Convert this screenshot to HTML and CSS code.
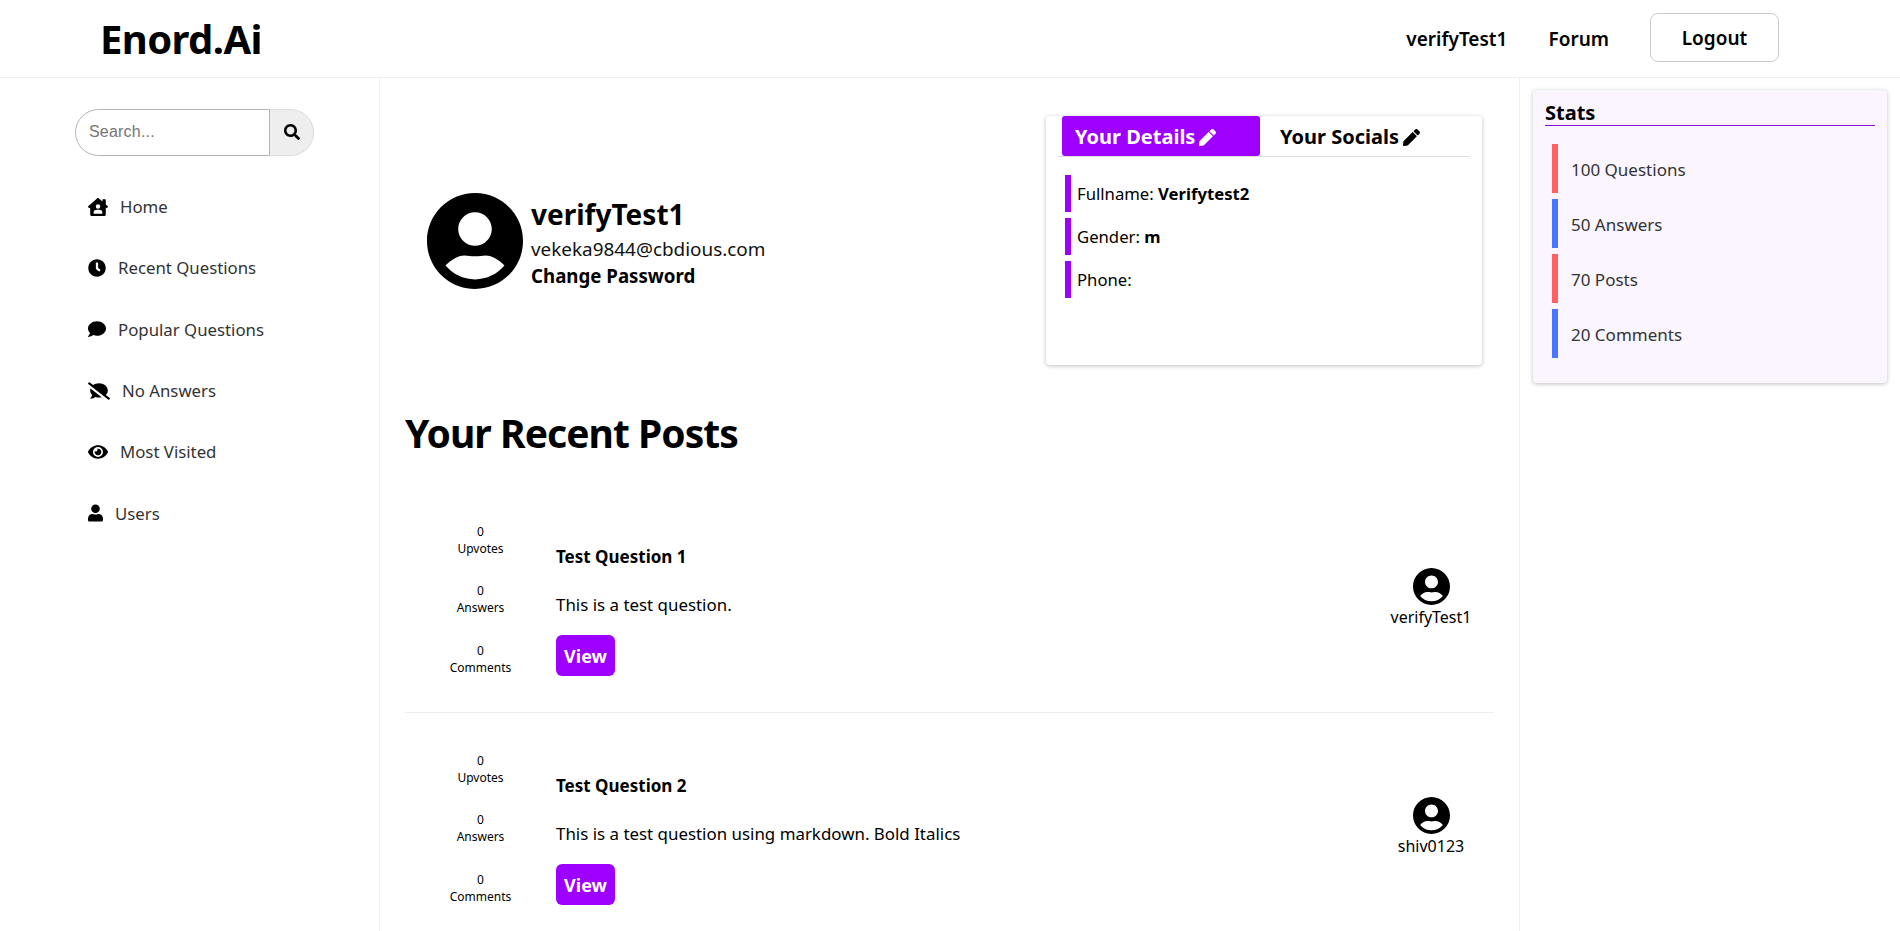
FILE: index.html
```html
<!DOCTYPE html>
<html lang="en">
<head>
    <meta charset="UTF-8">
    <title>Enord.Ai</title>
    <meta name="viewport" content="width=device-width, initial-scale=1.0">
    <link rel="stylesheet" href="styles.css">
</head>
<body>
    <svg class="icon-defs" aria-hidden="true">
        <symbol id="i-search" viewBox="0 0 512 512"><path d="M505 442.7L405.3 343c-4.5-4.5-10.6-7-17-7H372c27.6-35.3 44-79.7 44-128C416 93.1 322.9 0 208 0S0 93.1 0 208s93.1 208 208 208c48.3 0 92.7-16.4 128-44v16.3c0 6.4 2.5 12.5 7 17l99.7 99.7c9.4 9.4 24.6 9.4 33.9 0l28.3-28.3c9.4-9.4 9.4-24.6.1-34zM208 336c-70.7 0-128-57.2-128-128 0-70.7 57.2-128 128-128 70.7 0 128 57.2 128 128 0 70.7-57.2 128-128 128z"/></symbol>
        <symbol id="i-home" viewBox="0 0 576 512"><path d="M570.69,236.27,512,184.44V48a16,16,0,0,0-16-16H432a16,16,0,0,0-16,16V99.67L314.78,10.3C308.5,4.61,296.53,0,288,0s-20.46,4.61-26.74,10.3l-256,226A18.27,18.27,0,0,0,0,248.2a18.64,18.64,0,0,0,4.09,10.71L25.5,282.7a21.14,21.14,0,0,0,12,5.3,21.67,21.67,0,0,0,10.69-4.11l15.9-14V480a32,32,0,0,0,32,32H480a32,32,0,0,0,32-32V269.88l15.91,14A21.94,21.94,0,0,0,538.63,288a20.89,20.89,0,0,0,11.87-5.31l21.41-23.81A21.64,21.64,0,0,0,576,248.19,21,21,0,0,0,570.69,236.27ZM288,176a64,64,0,1,1-64,64A64,64,0,0,1,288,176ZM400,448H176a16,16,0,0,1-16-16,96,96,0,0,1,96-96h64a96,96,0,0,1,96,96A16,16,0,0,1,400,448Z"/></symbol>
        <symbol id="i-clock" viewBox="0 0 512 512"><path d="M256,8C119,8,8,119,8,256S119,504,256,504,504,393,504,256,393,8,256,8Zm92.49,313h0l-20,25a16,16,0,0,1-22.49,2.5h0l-67-49.72a40,40,0,0,1-15-31.23V112a16,16,0,0,1,16-16h32a16,16,0,0,1,16,16V256l58,42.5A16,16,0,0,1,348.49,321Z"/></symbol>
        <symbol id="i-comment" viewBox="0 0 512 512"><path d="M256 32C114.6 32 0 125.1 0 240c0 49.6 21.4 95 57 130.7C44.5 421.1 2.7 466 2.2 466.5c-2.2 2.3-2.8 5.7-1.5 8.7S4.8 480 8 480c66.3 0 116-31.8 140.6-51.4 32.7 12.3 69 19.4 107.4 19.4 141.4 0 256-93.1 256-208S397.4 32 256 32z"/></symbol>
        <symbol id="i-comment-slash" viewBox="0 0 640 512"><path d="M64 240c0 49.6 21.4 95 57 130.7-12.6 50.3-54.3 95.2-54.8 95.8-2.2 2.3-2.8 5.7-1.5 8.7 1.3 2.9 4.1 4.8 7.3 4.8 66.3 0 116-31.8 140.6-51.4 32.7 12.3 69 19.4 107.4 19.4 27.4 0 53.7-3.6 78.4-10L72.9 186.4c-5.6 17.1-8.9 35-8.9 53.6zm569.8 218.1l-114.4-88.4C554.6 334.1 576 289.2 576 240c0-114.9-114.6-208-256-208-65.1 0-124.2 20.1-169.4 52.7L45.5 3.4C38.5-2 28.5-.8 23 6.2L3.4 31.4c-5.4 7-4.2 17 2.8 22.4l588.4 454.7c7 5.4 17 4.2 22.5-2.8l19.6-25.3c5.5-6.8 4.3-16.8-2.9-22.3z"/></symbol>
        <symbol id="i-eye" viewBox="0 0 576 512"><path d="M572.52 241.4C518.29 135.59 410.93 64 288 64S57.68 135.64 3.48 241.41a32.35 32.35 0 0 0 0 29.19C57.71 376.41 165.07 448 288 448s230.32-71.64 284.52-177.41a32.35 32.35 0 0 0 0-29.19zM288 400a144 144 0 1 1 144-144 143.93 143.93 0 0 1-144 144zm0-240a95.31 95.31 0 0 0-25.31 3.79 47.85 47.85 0 0 1-66.9 66.9A95.78 95.78 0 1 0 288 160z"/></symbol>
        <symbol id="i-user" viewBox="0 0 448 512"><path d="M224 256c70.7 0 128-57.3 128-128S294.7 0 224 0 96 57.3 96 128s57.3 128 128 128zm89.6 32h-16.7c-22.2 10.2-46.9 16-72.9 16s-50.6-5.8-72.9-16h-16.7C60.2 288 0 348.2 0 422.4V464c0 26.5 21.5 48 48 48h352c26.5 0 48-21.5 48-48v-41.6c0-74.2-60.2-134.4-134.4-134.4z"/></symbol>
        <symbol id="i-pen" viewBox="0 0 512 512"><path d="M290.74 93.24l128.02 128.02-277.99 277.99-114.14 12.6C11.35 513.54-1.56 500.62.14 485.34l12.7-114.22 277.9-278.88zm207.2-19.06l-60.11-60.11c-18.75-18.75-49.16-18.75-67.91 0l-56.55 56.55 128.02 128.02 56.55-56.55c18.75-18.76 18.75-49.16 0-67.91z"/></symbol>
        <symbol id="i-account" viewBox="2 2 20 20"><path fill-rule="evenodd" d="M12 2C6.47 2 2 6.47 2 12s4.47 10 10 10 10-4.47 10-10S17.53 2 12 2zm0 4c1.93 0 3.5 1.57 3.5 3.5S13.93 13 12 13s-3.5-1.57-3.5-3.5S10.07 6 12 6zm0 14c-2.5 0-4.6-1.1-6.14-2.88C7 15.9 8.4 15 9.8 15c.8 0 1.3.2 2.2.2s1.4-.2 2.2-.2c1.4 0 2.8.9 3.94 2.12C16.6 18.9 14.5 20 12 20z"/></symbol>
    </svg>

    <header class="topbar">
        <div class="logo">Enord.Ai</div>
        <nav class="topnav">
            <a href="#">verifyTest1</a>
            <a href="#">Forum</a>
            <button class="logout-btn">Logout</button>
        </nav>
    </header>

    <div class="layout">
        <aside class="sidebar">
            <form class="search">
                <input type="text" placeholder="Search...">
                <button type="button"><svg class="icon"><use href="#i-search"/></svg></button>
            </form>
            <ul class="side-menu">
                <li><svg class="icon icon-home"><use href="#i-home"/></svg>Home</li>
                <li><svg class="icon icon-round"><use href="#i-clock"/></svg>Recent Questions</li>
                <li><svg class="icon icon-round"><use href="#i-comment"/></svg>Popular Questions</li>
                <li><svg class="icon icon-slash"><use href="#i-comment-slash"/></svg>No Answers</li>
                <li><svg class="icon icon-home"><use href="#i-eye"/></svg>Most Visited</li>
                <li><svg class="icon icon-user"><use href="#i-user"/></svg>Users</li>
            </ul>
        </aside>

        <main class="content">
            <section class="profile-row">
                <div class="profile">
                    <svg class="avatar-big"><use href="#i-account"/></svg>
                    <div class="profile-text">
                        <h2>verifyTest1</h2>
                        <div class="email">vekeka9844@cbdious.com</div>
                        <a href="#" class="change-pass">Change Password</a>
                    </div>
                </div>
                <div class="details-card">
                    <div class="tabs">
                        <div class="tab active">Your Details <svg class="icon"><use href="#i-pen"/></svg></div>
                        <div class="tab">Your Socials <svg class="icon"><use href="#i-pen"/></svg></div>
                    </div>
                    <ul class="details">
                        <li>Fullname:&nbsp;<b>Verifytest2</b></li>
                        <li>Gender:&nbsp;<b>m</b></li>
                        <li>Phone:</li>
                    </ul>
                </div>
            </section>

            <h1 class="section-title">Your Recent Posts</h1>

            <article class="post">
                <div class="post-stats">
                    <div>0<br>Upvotes</div>
                    <div>0<br>Answers</div>
                    <div>0<br>Comments</div>
                </div>
                <div class="post-body">
                    <h3>Test Question 1</h3>
                    <p>This is a test question.</p>
                    <button class="view-btn">View</button>
                </div>
                <div class="post-user">
                    <svg><use href="#i-account"/></svg>
                    <span>verifyTest1</span>
                </div>
            </article>

            <article class="post">
                <div class="post-stats">
                    <div>0<br>Upvotes</div>
                    <div>0<br>Answers</div>
                    <div>0<br>Comments</div>
                </div>
                <div class="post-body">
                    <h3>Test Question 2</h3>
                    <p>This is a test question using markdown. Bold Italics</p>
                    <button class="view-btn">View</button>
                </div>
                <div class="post-user">
                    <svg><use href="#i-account"/></svg>
                    <span>shiv0123</span>
                </div>
            </article>
        </main>

        <aside class="right-panel">
            <div class="stats-card">
                <h4>Stats</h4>
                <ul class="stats-list">
                    <li class="red">100 Questions</li>
                    <li class="blue">50 Answers</li>
                    <li class="red">70 Posts</li>
                    <li class="blue">20 Comments</li>
                </ul>
            </div>
        </aside>
    </div>
</body>
</html>
```

FILE: styles.css
```css
html, body { height: 100%; overflow: hidden; }
body { margin: 0; background: #fff; color: #000; font-family: "Noto Sans", "Open Sans", sans-serif; }
h1, h2, h3, h4, p, ul { margin: 0; padding: 0; }
ul { list-style-type: none; }
a { color: inherit; text-decoration: none; }
.icon-defs { display: none; }
.icon { fill: currentColor; display: block; flex-shrink: 0; }

.topbar { height: 77px; border-bottom: 1px solid #eee; display: flex; justify-content: space-between; align-items: center; padding: 0 121px 0 100px; }
.logo { font-size: 40px; font-weight: 700; letter-spacing: -0.6px; }
.topnav { display: flex; align-items: center; gap: 41px; font-size: 19px; font-weight: 600; }
.logout-btn { width: 129px; height: 49px; margin-top: -2px; background: #fff; border: 1px solid #ccc; border-radius: 8px; font: inherit; color: #000; }

.layout { display: grid; grid-template-columns: 380px 1140px 380px; height: calc(100vh - 78px); overflow: hidden; }

.sidebar { border-right: 1px solid #eee; padding: 31px 0 0 75px; }
.search { display: flex; width: 239px; height: 47px; }
.search input { width: 195px; box-sizing: border-box; padding: 0 13px 2px; border: 1px solid #b3b3b3; border-radius: 24px 0 0 24px; font: 16px "Liberation Sans", sans-serif; letter-spacing: 0.2px; outline: none; }
.search input::placeholder { color: #757575; }
.search button { width: 44px; padding: 0 0 2px; display: flex; align-items: center; justify-content: center; background: #eee; border: 1px solid #ddd; border-left: none; border-radius: 0 24px 24px 0; }
.search .icon { width: 16px; height: 16px; }
.side-menu { margin-top: 20px; }
.side-menu li { height: 61.3px; padding-left: 13px; display: flex; align-items: center; gap: 12px; font-size: 16.8px; color: #333; }
.side-menu .icon { color: #000; height: 18px; }
.icon-home { width: 20px; }
.icon-round { width: 18px; }
.icon-slash { width: 22px; }
.icon-user { width: 15px; }

.content { border-right: 1px solid #eee; padding: 38px 25px 0; }
.profile-row { display: flex; justify-content: space-between; align-items: center; padding: 0 12px 0 22px; }
.profile { display: flex; align-items: center; gap: 8px; }
.avatar-big { width: 96px; height: 96px; }
.profile-text { margin-top: 4px; }
.profile-text h2 { font-size: 28px; font-weight: 700; line-height: 36px; margin-bottom: 4px; }
.email { font-size: 18.9px; line-height: 26px; color: #111; }
.change-pass { font-size: 18.7px; font-weight: 700; line-height: 28px; display: block; }

.details-card { width: 436px; height: 249px; box-sizing: border-box; padding: 0 12px; background: #fff; border-radius: 4px; box-shadow: 0 1px 4px rgba(0,0,0,0.25); }
.tabs { display: flex; height: 40px; padding-left: 4px; border-bottom: 1px solid #ddd; font-size: 20px; font-weight: 700; }
.tab { width: 198px; box-sizing: border-box; padding-left: 20px; display: flex; align-items: center; gap: 4px; white-space: nowrap; }
.tab .icon { width: 17px; height: 17px; margin-top: 2px; }
.tab.active { padding-left: 13px; background: #9d00ff; color: #fff; border-radius: 3px; }
.details { margin: 18px 0 0 7px; }
.details li { height: 37px; margin-bottom: 6px; padding-left: 6px; border-left: 6px solid #9d00ff; display: flex; align-items: center; font-size: 16.7px; }
.details b { font-weight: 700; }

.section-title { margin: 41px 0 24px; font-size: 39px; font-weight: 700; line-height: 54px; letter-spacing: -0.95px; }

.post { height: 228px; border-bottom: 1px solid #eee; display: flex; align-items: center; }
.post-stats { width: 151px; flex-shrink: 0; margin-top: 2px; display: flex; flex-direction: column; gap: 25.5px; text-align: center; font-size: 12px; line-height: 17px; }
.post-body { flex: 1; margin-top: 25px; }
.post-body h3 { font-size: 17px; font-weight: 700; line-height: 24px; margin-bottom: 24px; }
.post-body p { font-size: 16.9px; line-height: 24px; margin-bottom: 18px; }
.view-btn { display: block; width: 59px; height: 41px; padding: 0; background: #9d00ff; color: #fff; border: none; border-radius: 6px; font: 700 18px "Noto Sans", sans-serif; }
.post-user { width: 126px; display: flex; flex-direction: column; align-items: center; font-size: 16px; line-height: 24px; }
.post-user svg { width: 37px; height: 37px; }

.right-panel { padding: 12px 13px; }
.stats-card { height: 293px; box-sizing: border-box; padding: 12px; background: #faf5ff; border-radius: 4px; box-shadow: 0 1px 4px rgba(0,0,0,0.25); }
.stats-card h4 { height: 23px; border-bottom: 1px solid #8a10d8; font-size: 20px; font-weight: 700; line-height: 21px; }
.stats-list { margin: 18px 0 0 7px; }
.stats-list li { height: 49px; margin-bottom: 6px; padding: 1px 0 0 13px; box-sizing: border-box; border-left: 6px solid; display: flex; align-items: center; font-size: 17px; color: #333; }
.stats-list .red { border-color: #ff6060; }
.stats-list .blue { border-color: #4a76ff; }
```
